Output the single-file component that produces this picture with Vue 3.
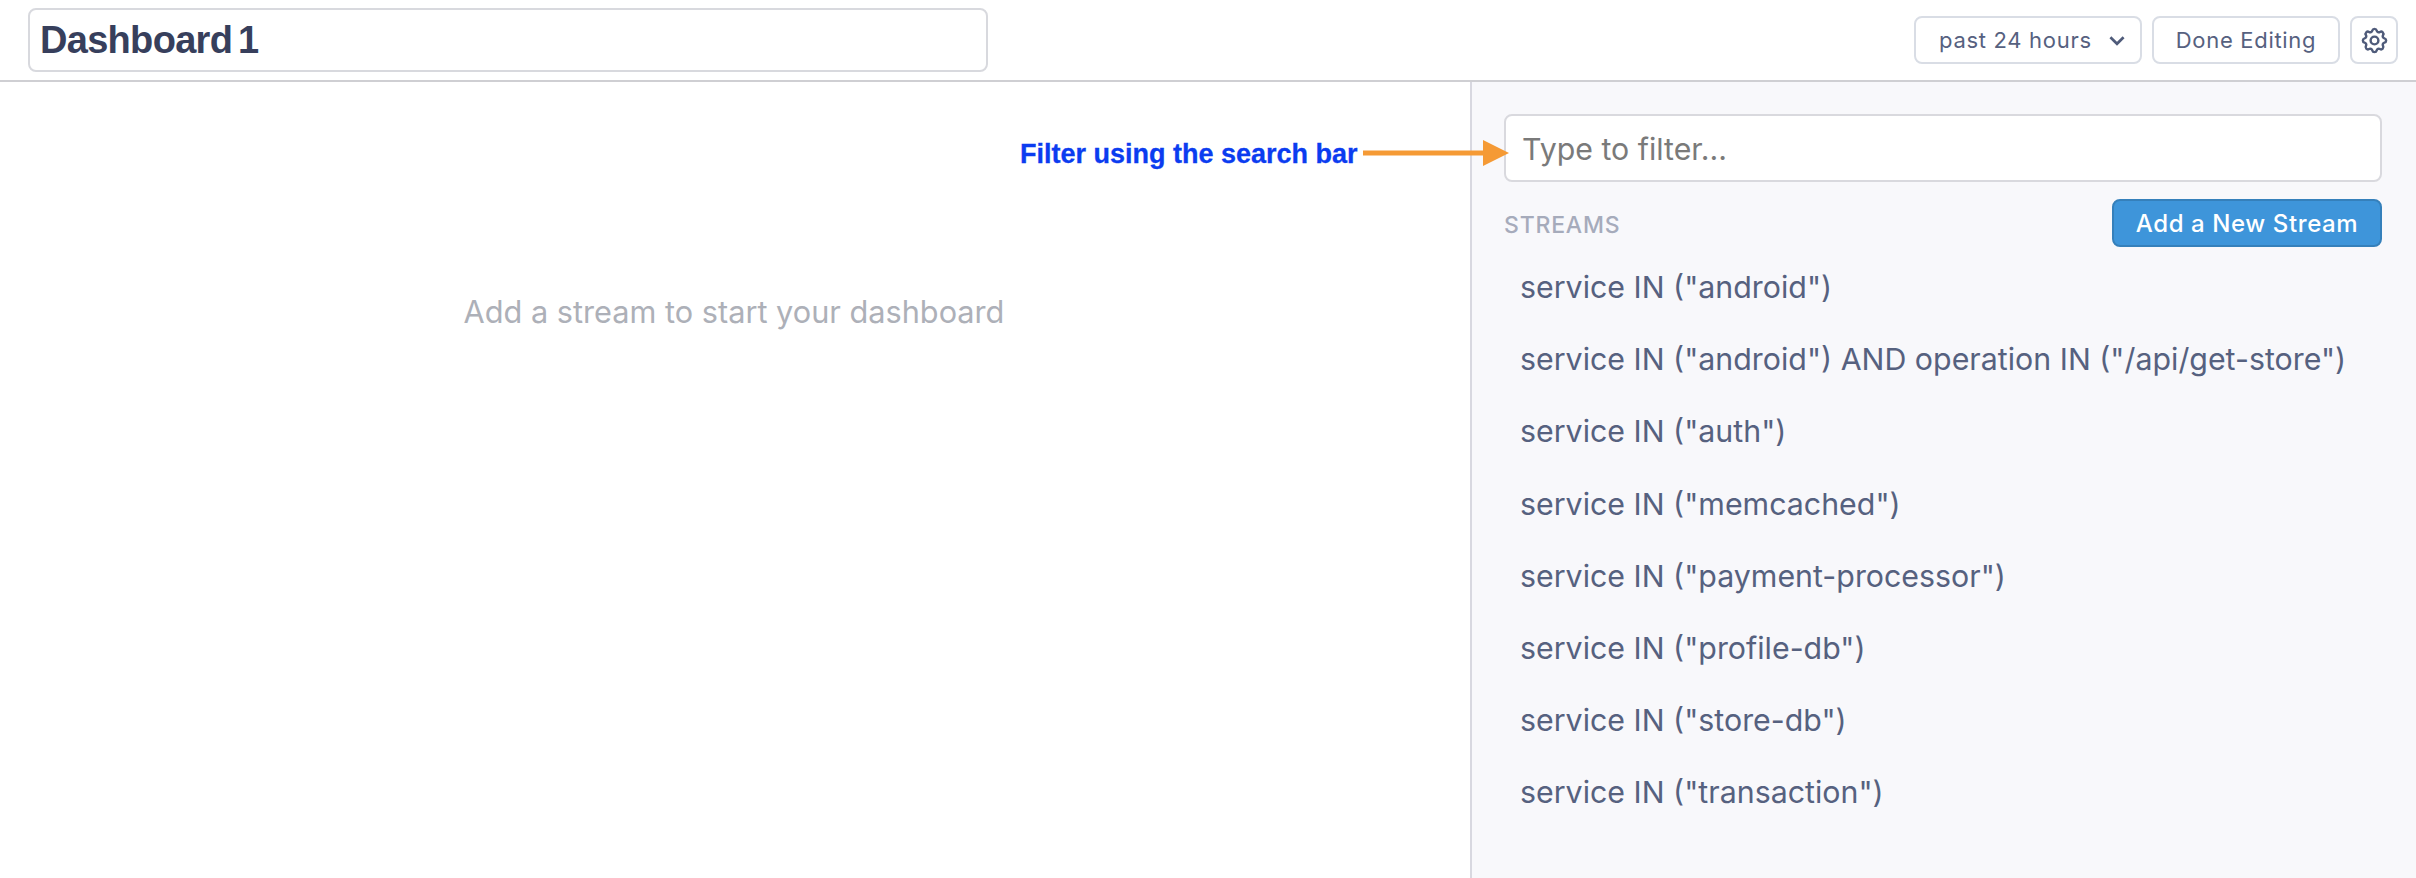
<script setup>
const streams = [
  'service IN ("android")',
  'service IN ("android") AND operation IN ("/api/get-store")',
  'service IN ("auth")',
  'service IN ("memcached")',
  'service IN ("payment-processor")',
  'service IN ("profile-db")',
  'service IN ("store-db")',
  'service IN ("transaction")'
]
</script>

<template>
  <div class="page">
    <header class="top">
      <div class="title-box"><span>Dashboard 1</span></div>
      <div class="actions">
        <button class="btn range">past 24 hours
          <svg class="chev" viewBox="0 0 16 10" width="18" height="11"><path d="M2 2l6 6 6-6" fill="none" stroke="#4f5b7a" stroke-width="2.4"/></svg>
        </button>
        <button class="btn done">Done Editing</button>
        <button class="btn gear" aria-label="settings">
          <svg viewBox="0 0 24 24" width="31" height="31" fill="none" stroke="#4f5b7a" stroke-width="1.9" stroke-linecap="round" stroke-linejoin="round">
            <path d="M10.33 4.32c.43-1.76 2.92-1.76 3.34 0a1.72 1.72 0 0 0 2.57 1.07c1.54-.94 3.31.83 2.37 2.37a1.72 1.72 0 0 0 1.07 2.57c1.76.43 1.76 2.92 0 3.34a1.72 1.72 0 0 0-1.07 2.57c.94 1.54-.83 3.31-2.37 2.37a1.72 1.72 0 0 0-2.57 1.07c-.43 1.76-2.92 1.76-3.34 0a1.72 1.72 0 0 0-2.57-1.07c-1.54.94-3.31-.83-2.37-2.37a1.72 1.72 0 0 0-1.07-2.57c-1.76-.43-1.76-2.92 0-3.34a1.72 1.72 0 0 0 1.07-2.57c-.94-1.54.83-3.31 2.37-2.37.99.6 2.3.07 2.57-1.07z"/>
            <circle cx="12" cy="12" r="3"/>
          </svg>
        </button>
      </div>
    </header>
    <main class="body">
      <section class="canvas">
        <p class="empty">Add a stream to start your dashboard</p>
      </section>
      <aside class="side">
        <div class="search"><span class="placeholder">Type to filter...</span></div>
        <div class="streams-head">
          <span class="label">STREAMS</span>
          <button class="add">Add a New Stream</button>
        </div>
        <ul class="list">
          <li v-for="s in streams" :key="s">{{ s }}</li>
        </ul>
      </aside>
      <div class="note">
        <span class="note-text">Filter using the search bar</span>
        <svg class="arrow" width="146" height="26" viewBox="0 0 146 26"><rect x="0" y="10.5" width="122" height="5" fill="#f59a35"/><path d="M120 0l26 13-26 13z" fill="#f59a35"/></svg>
      </div>
    </main>
  </div>
</template>

<style>
html, body { margin: 0; background: #fff; }
</style>

<style scoped>
.page { width: 2416px; height: 878px; overflow: hidden; display: flex; flex-direction: column; font-family: Inter, "Liberation Sans", sans-serif; color: #56617f; }
.top { height: 80px; flex: none; display: flex; align-items: center; justify-content: space-between; padding: 0 18px 0 28px; border-bottom: 2px solid #cfcfd3; box-sizing: content-box; }
.title-box { width: 960px; height: 64px; box-sizing: border-box; border: 2px solid #d8d9de; border-radius: 8px; padding-left: 10px; display: flex; align-items: center; font-family: "Liberation Sans", Arial, sans-serif; font-weight: 700; font-size: 38px; letter-spacing: -0.7px; word-spacing: -4px; color: #373f5c; }
.actions { display: flex; gap: 10px; }
.btn { height: 48px; box-sizing: border-box; border: 2px solid #d9dde5; border-radius: 8px; background: #fff; font-family: Inter, sans-serif; font-size: 22px; letter-spacing: 0.7px; color: #56617f; padding: 0; display: flex; align-items: center; justify-content: center; }
.range { width: 228px; gap: 16px; justify-content: flex-start; padding-left: 23px; }
.done { width: 188px; }
.gear { width: 48px; }
.body { flex: 1; display: flex; position: relative; min-height: 0; }
.canvas { flex: 1; text-align: center; }
.empty { margin: 0; padding-top: 210px; font-size: 30.7px; line-height: 40px; color: #adb0b8; padding-right: 2px; }
.side { width: 946px; flex: none; box-sizing: border-box; background: #f8f8fb; border-left: 2px solid #d8d8e0; padding: 32px 34px 0 32px; }
.search { height: 68px; box-sizing: border-box; border: 2px solid #d9d9de; border-radius: 8px; background: #fff; padding: 2px 0 0 16px; display: flex; align-items: center; font-size: 30.3px; color: #7a7a7a; }
.streams-head { display: flex; justify-content: space-between; align-items: center; margin-top: 17px; }
.label { font-size: 23px; font-weight: 500; letter-spacing: 0.8px; color: #a6abbb; padding-top: 3px; }
.add { width: 270px; height: 48px; box-sizing: border-box; background: #3e95da; border: 2px solid #3580bb; border-radius: 8px; color: #fff; font-family: Inter, sans-serif; font-size: 24px; font-weight: 500; letter-spacing: 0.6px; padding: 0; }
.list { list-style: none; margin: 4px 0 0; padding: 0 0 0 16px; }
.list li { height: 72.2px; line-height: 72px; font-size: 30.35px; white-space: nowrap; }
.note { position: absolute; left: 1020px; top: 55px; display: flex; align-items: center; gap: 5px; }
.note-text { font-family: "Liberation Sans", Arial, sans-serif; font-weight: 700; font-size: 27px; color: #0b3cf0; white-space: nowrap; -webkit-text-stroke: 0.3px #0b3cf0; padding-top: 2px; }
.arrow { margin-top: -2px; }
</style>
